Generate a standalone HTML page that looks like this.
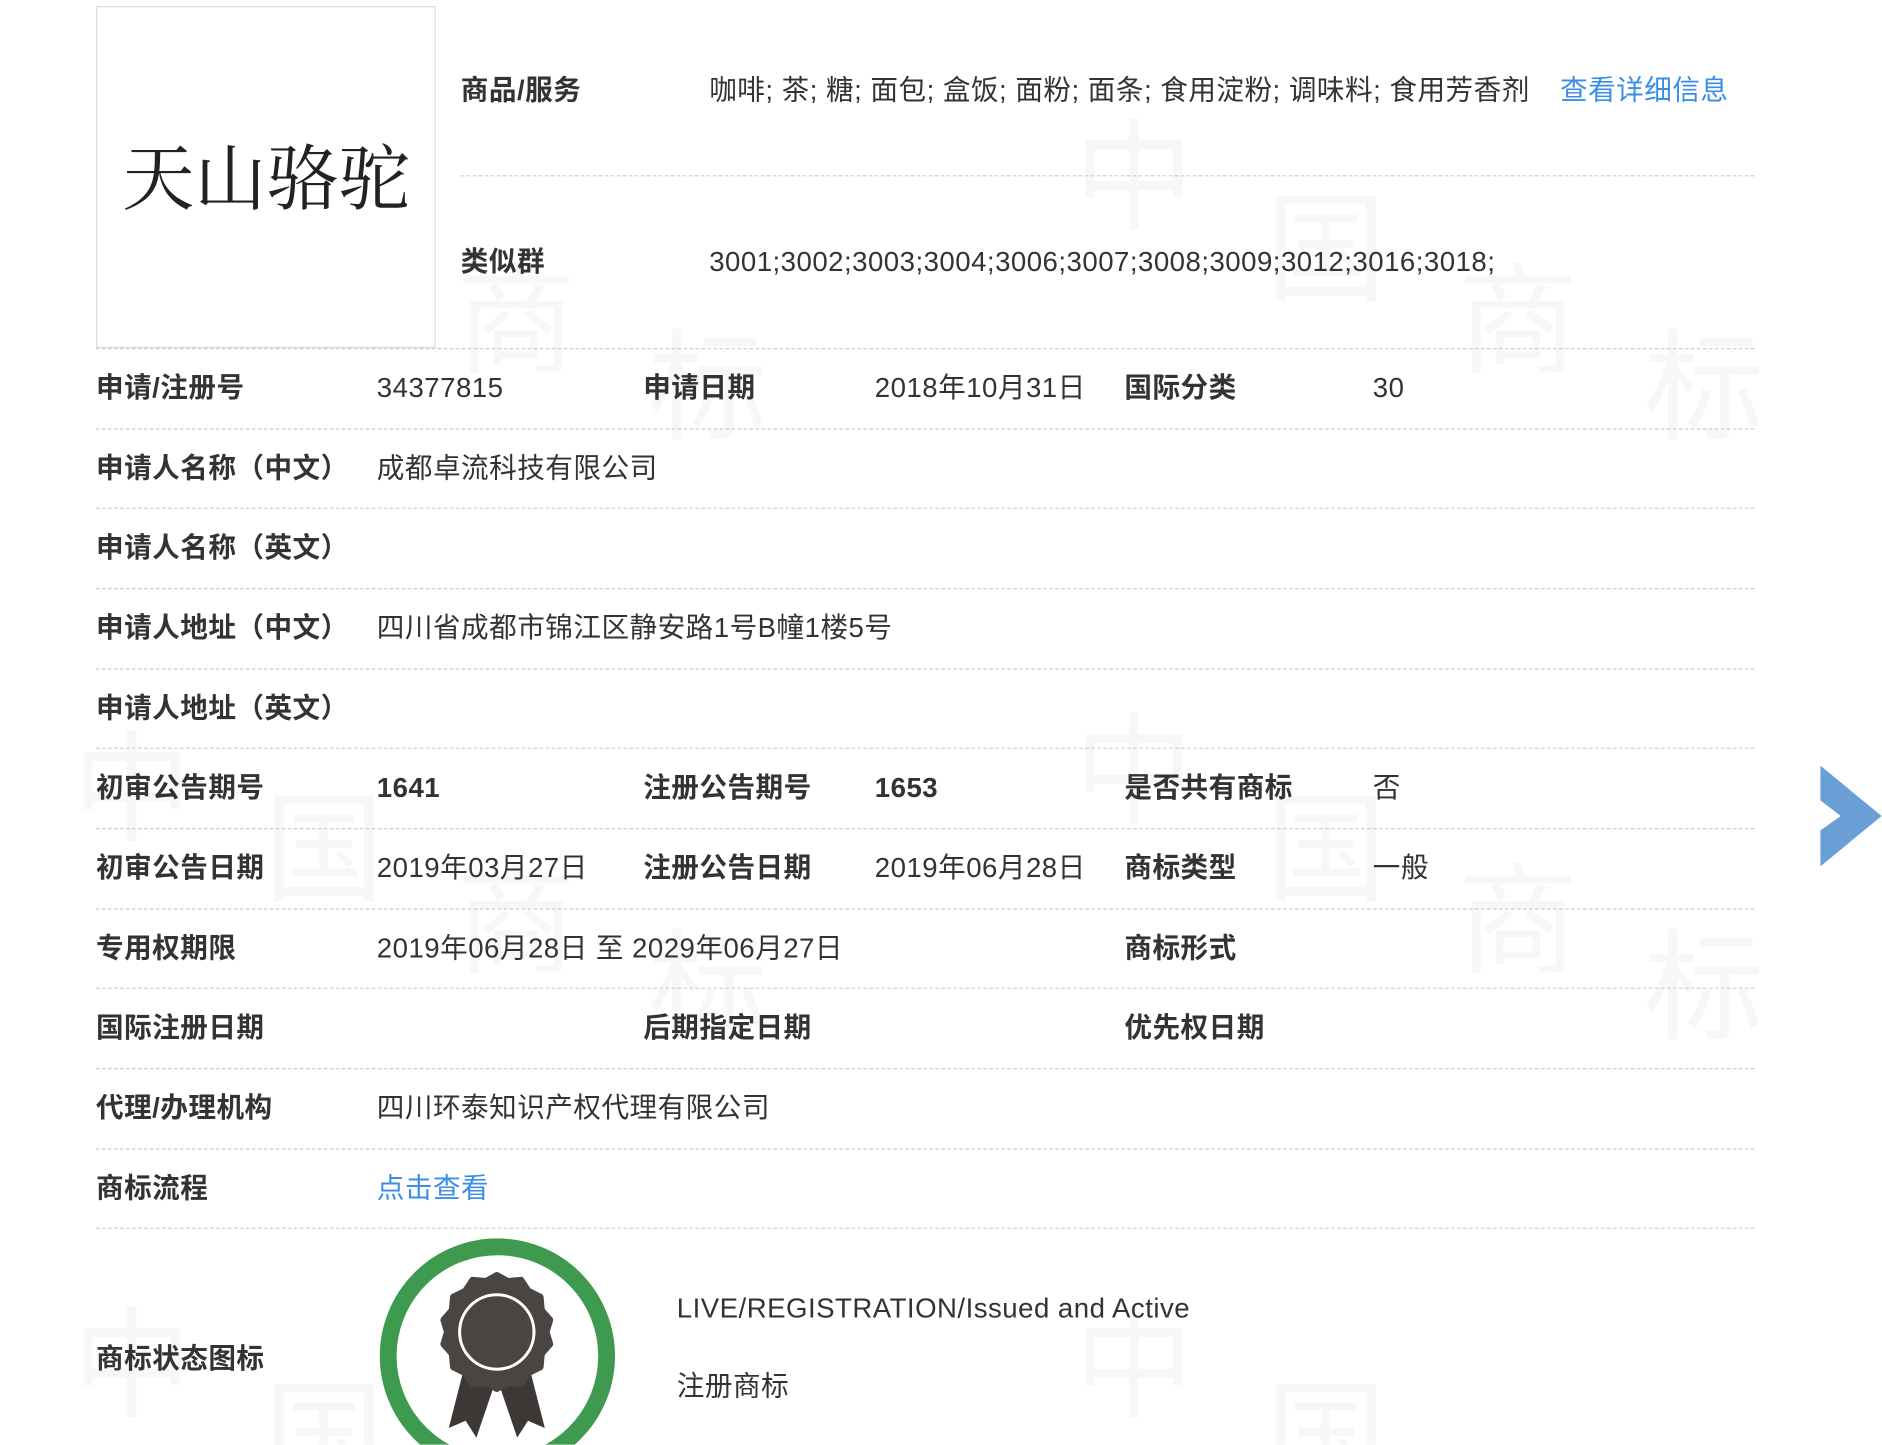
<!DOCTYPE html>
<html><head><meta charset="utf-8"><style>
html,body{margin:0;padding:0;background:#fff;overflow:hidden;width:1882px;height:1444px}
#w{position:absolute;left:0;top:0;width:1568px;height:1204px;overflow:hidden;transform:scale(1.2);transform-origin:0 0;font-family:"Liberation Sans","Noto Sans CJK SC",sans-serif;font-size:23px;letter-spacing:0.4px;color:#333}
.t{position:absolute;white-space:nowrap;line-height:30px;transform:translateY(-15px)}
.b{font-weight:bold;color:#333}
.l{position:absolute;height:0;border-top:1.5px dashed #ccc}
.a{color:#3a8ee6}
.wm{position:absolute;color:#f7f7f7;font-size:100px;font-family:"Noto Sans CJK SC",sans-serif;line-height:1}
</style></head><body><div id="w">
<div class="wm" style="left:895px;top:90px">中</div>
<div class="wm" style="left:1055px;top:150px">国</div>
<div class="wm" style="left:380px;top:210px">商</div>
<div class="wm" style="left:1215px;top:210px">商</div>
<div class="wm" style="left:540px;top:265px">标</div>
<div class="wm" style="left:1370px;top:265px">标</div>
<div class="wm" style="left:895px;top:585px">中</div>
<div class="wm" style="left:60px;top:600px">中</div>
<div class="wm" style="left:1055px;top:650px">国</div>
<div class="wm" style="left:220px;top:650px">国</div>
<div class="wm" style="left:1215px;top:710px">商</div>
<div class="wm" style="left:380px;top:710px">商</div>
<div class="wm" style="left:1370px;top:765px">标</div>
<div class="wm" style="left:540px;top:765px">标</div>
<div class="wm" style="left:895px;top:1080px">中</div>
<div class="wm" style="left:60px;top:1080px">中</div>
<div class="wm" style="left:1055px;top:1140px">国</div>
<div class="wm" style="left:220px;top:1140px">国</div>

<div style="position:absolute;left:80px;top:5px;width:281px;height:283px;border:1.5px solid #ddd;background:#fff"></div>
<div style="position:absolute;left:80px;top:110px;width:284px;text-align:center;font-family:'Noto Serif CJK SC',serif;font-size:60px;letter-spacing:0;line-height:70px;color:#222">天山骆驼</div>

<div class="t b" style="left:384px;top:75px">商品/服务</div>
<div class="t" style="left:591px;top:75px">咖啡; 茶; 糖; 面包; 盒饭; 面粉; 面条; 食用淀粉; 调味料; 食用芳香剂</div>
<div class="t a" style="left:1300px;top:75px">查看详细信息</div>
<div class="l" style="left:384px;top:146px;width:1078px"></div>
<div class="t b" style="left:384px;top:218px">类似群</div>
<div class="t" style="left:591px;top:218px">3001;3002;3003;3004;3006;3007;3008;3009;3012;3016;3018;</div>
<div class="l" style="left:80px;top:290px;width:1382px"></div>

<div class="t b" style="left:80px;top:323px">申请/注册号</div><div class="t" style="left:314px;top:323px">34377815</div>
<div class="t b" style="left:536px;top:323px">申请日期</div><div class="t" style="left:729px;top:323px">2018年10月31日</div>
<div class="t b" style="left:937px;top:323px">国际分类</div><div class="t" style="left:1144px;top:323px">30</div>
<div class="l" style="left:80px;top:357px;width:1382px"></div>

<div class="t b" style="left:80px;top:390px">申请人名称（中文）</div><div class="t" style="left:314px;top:390px">成都卓流科技有限公司</div>
<div class="l" style="left:80px;top:423px;width:1382px"></div>
<div class="t b" style="left:80px;top:456px">申请人名称（英文）</div>
<div class="l" style="left:80px;top:490px;width:1382px"></div>
<div class="t b" style="left:80px;top:523px">申请人地址（中文）</div><div class="t" style="left:314px;top:523px">四川省成都市锦江区静安路1号B幢1楼5号</div>
<div class="l" style="left:80px;top:557px;width:1382px"></div>
<div class="t b" style="left:80px;top:590px">申请人地址（英文）</div>
<div class="l" style="left:80px;top:623px;width:1382px"></div>

<div class="t b" style="left:80px;top:656px">初审公告期号</div><div class="t b" style="left:314px;top:656px">1641</div>
<div class="t b" style="left:536px;top:656px">注册公告期号</div><div class="t b" style="left:729px;top:656px">1653</div>
<div class="t b" style="left:937px;top:656px">是否共有商标</div><div class="t" style="left:1144px;top:656px">否</div>
<div class="l" style="left:80px;top:690px;width:1382px"></div>

<div class="t b" style="left:80px;top:723px">初审公告日期</div><div class="t" style="left:314px;top:723px">2019年03月27日</div>
<div class="t b" style="left:536px;top:723px">注册公告日期</div><div class="t" style="left:729px;top:723px">2019年06月28日</div>
<div class="t b" style="left:937px;top:723px">商标类型</div><div class="t" style="left:1144px;top:723px">一般</div>
<div class="l" style="left:80px;top:757px;width:1382px"></div>

<div class="t b" style="left:80px;top:790px">专用权期限</div><div class="t" style="left:314px;top:790px">2019年06月28日 至 2029年06月27日</div>
<div class="t b" style="left:937px;top:790px">商标形式</div>
<div class="l" style="left:80px;top:823px;width:1382px"></div>

<div class="t b" style="left:80px;top:856px">国际注册日期</div>
<div class="t b" style="left:536px;top:856px">后期指定日期</div>
<div class="t b" style="left:937px;top:856px">优先权日期</div>
<div class="l" style="left:80px;top:890px;width:1382px"></div>

<div class="t b" style="left:80px;top:923px">代理/办理机构</div><div class="t" style="left:314px;top:923px">四川环泰知识产权代理有限公司</div>
<div class="l" style="left:80px;top:957px;width:1382px"></div>
<div class="t b" style="left:80px;top:990px">商标流程</div><div class="t a" style="left:314px;top:990px">点击查看</div>
<div class="l" style="left:80px;top:1023px;width:1382px"></div>

<div class="t b" style="left:80px;top:1132px">商标状态图标</div>
<div class="t" style="left:564px;top:1090px">LIVE/REGISTRATION/Issued and Active</div>
<div class="t" style="left:564px;top:1155px">注册商标</div>

<svg style="position:absolute;left:0;top:0" width="1568" height="1204">
<circle cx="414.5" cy="1130" r="91" fill="none" stroke="#3e9a4f" stroke-width="14"/>
<path d="M388 1135 L374 1190 L388 1184 L397 1198 L414 1148 L431 1198 L440 1184 L454 1190 L440 1135 Z" fill="#3d3835"/>
<g transform="translate(414 1110)">
<path d="M0-47 L9-42 L20-43 L26-34 L36-29 L37-18 L44-10 L41 0 L44 10 L37 18 L36 29 L26 34 L20 43 L9 42 L0 47 L-9 42 L-20 43 L-26 34 L-36 29 L-37 18 L-44 10 L-41 0 L-44-10 L-37-18 L-36-29 L-26-34 L-20-43 L-9-42 Z" fill="#4a4542" stroke="#4a4542" stroke-width="6" stroke-linejoin="round"/>
<circle r="31" fill="none" stroke="#fff" stroke-width="2.5"/>
</g>
<path d="M1517 638 L1568 680 L1517 722 L1517 692 L1534 680 L1517 667 Z" fill="#6a9fd6"/>
</svg>
</div></body></html>
